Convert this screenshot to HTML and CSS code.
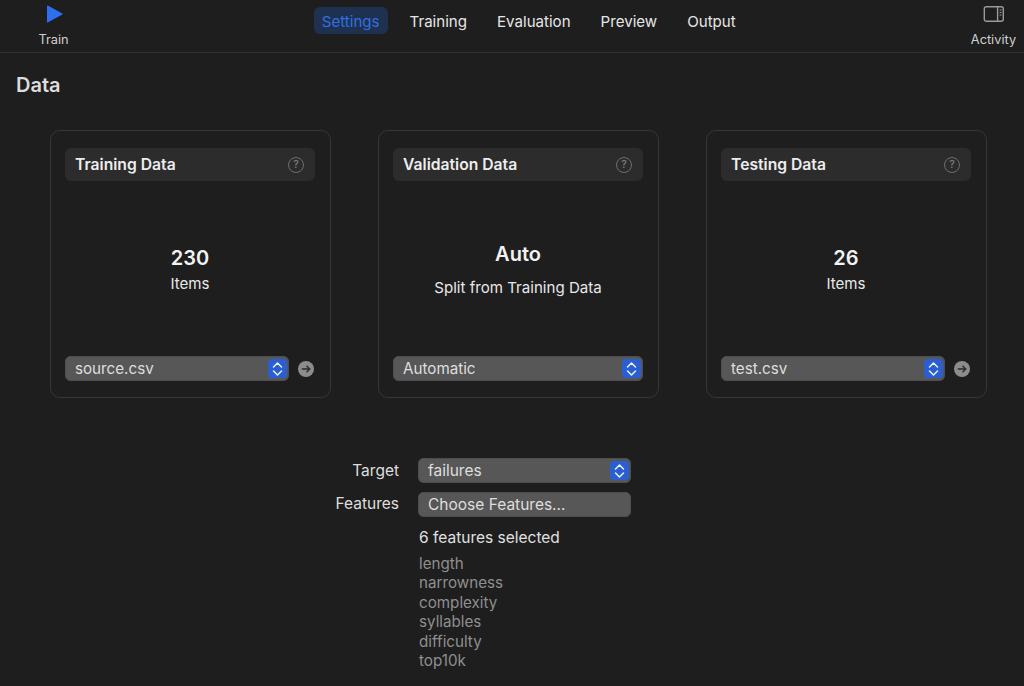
FILE: index.html
```html
<!DOCTYPE html>
<html lang="en">
<head>
<meta charset="utf-8">
<title>Data</title>
<link rel="stylesheet" href="styles.css">
</head>
<body>
<header class="toolbar">
  <div class="tool tool-train">
    <svg class="tool-icon" width="18" height="18" viewBox="0 0 18 18"><path class="play" d="M2 1v16c0 .5.4.7.8.5L17.300 9.500c.5-.3.5-.7 0-1L2.800.5C2.400.3 2 .5 2 1z"/></svg>
    <span>Train</span>
  </div>
  <nav class="tabs">
    <span class="tab tab-active">Settings</span>
    <span class="tab">Training</span>
    <span class="tab">Evaluation</span>
    <span class="tab">Preview</span>
    <span class="tab">Output</span>
  </nav>
  <div class="tool tool-activity">
    <svg class="tool-icon" width="22" height="18" viewBox="-0.600 0 22 18"><rect x="1.700" y="1.700" width="19" height="14.600" rx="2" class="outline"/><path d="M15 2v14" class="outline"/><path d="M17 5h2M17 7.500h2M17 10h2" class="outline thin"/></svg>
    <span>Activity</span>
  </div>
</header>
<main class="content">
  <h1 class="title">Data</h1>
  <section class="cards">
    <article class="card">
      <div class="card-head"><span>Training Data</span><span class="help">?</span></div>
      <div class="card-body"><strong class="big">230</strong><span>Items</span></div>
      <div class="card-foot">
        <div class="select"><span>source.csv</span><span class="stepper"><svg width="11" height="16" viewBox="0 0 11 16"><path d="M1.500 6 5.500 2l4 4M1.500 10l4 4 4-4" class="chev"/></svg></span></div>
        <span class="go"><svg width="16" height="16" viewBox="0 0 16 16"><circle cx="8" cy="8" r="8" class="go-bg"/><path d="M3.800 8h8M8.500 4.700 11.800 8l-3.300 3.300" class="go-arrow"/></svg></span>
      </div>
    </article>
    <article class="card">
      <div class="card-head"><span>Validation Data</span><span class="help">?</span></div>
      <div class="card-body card-body-auto"><strong class="big">Auto</strong><span>Split from Training Data</span></div>
      <div class="card-foot">
        <div class="select select-full"><span>Automatic</span><span class="stepper"><svg width="11" height="16" viewBox="0 0 11 16"><path d="M1.500 6 5.500 2l4 4M1.500 10l4 4 4-4" class="chev"/></svg></span></div>
      </div>
    </article>
    <article class="card">
      <div class="card-head"><span>Testing Data</span><span class="help">?</span></div>
      <div class="card-body"><strong class="big">26</strong><span>Items</span></div>
      <div class="card-foot">
        <div class="select"><span>test.csv</span><span class="stepper"><svg width="11" height="16" viewBox="0 0 11 16"><path d="M1.500 6 5.500 2l4 4M1.500 10l4 4 4-4" class="chev"/></svg></span></div>
        <span class="go"><svg width="16" height="16" viewBox="0 0 16 16"><circle cx="8" cy="8" r="8" class="go-bg"/><path d="M3.800 8h8M8.500 4.700 11.800 8l-3.300 3.300" class="go-arrow"/></svg></span>
      </div>
    </article>
  </section>
  <section class="form">
    <label class="form-label">Target</label>
    <div class="select select-full"><span>failures</span><span class="stepper"><svg width="11" height="16" viewBox="0 0 11 16"><path d="M1.500 6 5.500 2l4 4M1.500 10l4 4 4-4" class="chev"/></svg></span></div>
    <label class="form-label form-label-features">Features</label>
    <div class="select select-full"><span>Choose Features…</span></div>
    <div class="selected">
      <p class="count">6 features selected</p>
      <ul class="feature-list">
        <li>length</li>
        <li>narrowness</li>
        <li>complexity</li>
        <li>syllables</li>
        <li>difficulty</li>
        <li>top10k</li>
      </ul>
    </div>
  </section>
</main>
</body>
</html>
```
FILE: styles.css
```css
* { box-sizing: border-box; }
html, body { margin: 0; height: 100%; }
body {
  background: #1e1e1e;
  color: #e4e4e4;
  font-family: Inter, "Liberation Sans", sans-serif;
  font-size: 15.2px;
  overflow: hidden;
}
.toolbar {
  height: 53px;
  display: flex;
  align-items: flex-start;
  justify-content: space-between;
  border-bottom: 1px solid #313131;
  padding: 0 7px 0 38px;
}
.tool {
  display: flex;
  flex-direction: column;
  align-items: center;
  font-size: 12.8px;
  color: #cfcfcf;
  padding-top: 5px;
  gap: 9px;
  line-height: 15px;
  width: 31px;
}
.tool-activity { width: 47px; }
.tool-icon { display: block; height: 18px; }
.play { fill: #2c6fef; }
.outline { fill: none; stroke: #9a9a9a; stroke-width: 1.400; }
.thin { stroke-width: 1; }
.tabs {
  display: flex;
  gap: 14px;
  padding: 7px 0 0 12.500px;
  margin-left: 6px;
  font-size: 15.1px;
}
.tab {
  height: 27px;
  line-height: 29px;
  padding: 0 8px;
  border-radius: 6px;
  color: #e6e6e6;
}
.tab-active { background: #1f3150; color: #2f6fe0; }
.content { padding: 0 16px; }
.title {
  margin: 0;
  padding-top: 20px;
  height: 77px;
  font-size: 20px;
  line-height: 24px;
  font-weight: 600;
  color: #dcdcdc;
}
.cards {
  display: flex;
  gap: 47px;
  padding-left: 34px;
}
.card {
  width: 281px;
  height: 268px;
  border: 1px solid #363636;
  border-radius: 10px;
  padding: 17px 15px 16px 14px;
  display: flex;
  flex-direction: column;
}
.card-head {
  height: 33px;
  flex: none;
  display: flex;
  align-items: center;
  justify-content: space-between;
  background: #2c2c2c;
  border-radius: 6px;
  padding: 0 11px 0 10px;
  font-weight: 600;
  font-size: 15.700px;
  color: #ededed;
}
.help {
  width: 16px;
  height: 16px;
  border: 1.200px solid #6e6e6e;
  border-radius: 50%;
  color: #7c7c7c;
  font-size: 10.500px;
  font-weight: 500;
  line-height: 14px;
  text-align: center;
}
.card-body {
  flex: 1;
  display: flex;
  flex-direction: column;
  align-items: center;
  justify-content: center;
  gap: 3px;
  color: #e8e8e8;
  font-size: 15.100px;
}
.card-body-auto { gap: 11px; }
.big {
  font-size: 20px;
  line-height: 26px;
  font-weight: 600;
  color: #f2f2f2;
}
.card-foot {
  display: flex;
  align-items: center;
  gap: 9px;
}
.select {
  flex: 1;
  height: 25px;
  display: flex;
  align-items: center;
  justify-content: space-between;
  background: #575757;
  border-radius: 6px;
  padding: 0 2px 1px 10px;
  color: #dedede;
  box-shadow: inset 0 0 0 1px #4e4e4e;
}
.select-full { width: 100%; }
.stepper {
  width: 19px;
  height: 19px;
  margin-top: 1px;
  display: flex;
  align-items: center;
  justify-content: center;
  background: #2a5fd3;
  border-radius: 4px;
}
.chev { fill: none; stroke: #f0f0f0; stroke-width: 1.500; stroke-linecap: round; stroke-linejoin: round; }
.go { display: flex; flex: none; margin-right: 1px; }
.go-bg { fill: #8c8c8c; }
.go-arrow { fill: none; stroke: #2a2a2a; stroke-width: 1.300; }
.form {
  display: grid;
  grid-template-columns: 383px 213px;
  column-gap: 19px;
  row-gap: 9px;
  margin-top: 60px;
  font-size: 15.500px;
}
.form-label {
  text-align: right;
  color: #dedede;
  line-height: 25px;
}
.form-label-features { line-height: 23px; }
.selected { grid-column: 2; padding-top: 2px; padding-left: 1px; }
.count { margin: 0 0 6px; line-height: 20px; color: #e0e0e0; }
.feature-list {
  list-style: none;
  margin: 0;
  padding: 0;
  color: #8f8f8f;
  font-size: 15.200px;
  line-height: 19.400px;
}
```
